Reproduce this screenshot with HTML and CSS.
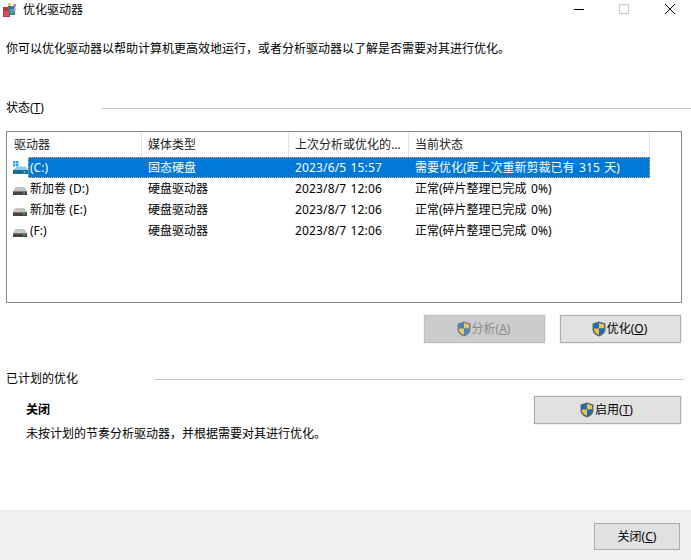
FILE: index.html
```html
<!DOCTYPE html>
<html lang="zh-CN">
<head>
<meta charset="utf-8">
<title>优化驱动器</title>
<link rel="stylesheet" href="styles.css">
</head>
<body>
<svg class="defs" width="0" height="0">
  <defs>
    <symbol id="shield" viewBox="0 0 14 16">
      <path d="M7 .5 13.500 2.500V8.500C13.500 12 10 14.500 7 15.500 4 14.500 .5 12 .5 8.500V2.500Z" fill="#5b6570"/>
      <path d="M7 2 2 3.500V7.500H7Z" fill="#0d6fc8"/>
      <path d="M7 2 12 3.500V7.500H7Z" fill="#f4c440"/>
      <path d="M2 7.500H7V13.800C4.500 12.800 2 11 2 8.500Z" fill="#f4c440"/>
      <path d="M12 7.500H7V13.800C9.500 12.800 12 11 12 8.500Z" fill="#0d6fc8"/>
    </symbol>
    <symbol id="hdd" viewBox="0 0 14 8">
      <path d="M2.500 0H11.500L14 4H0Z" fill="#c4c4c4"/>
      <rect x="0" y="4" width="14" height="4" fill="#454545"/>
      <rect x="0" y="4" width="14" height="1" fill="#777"/>
      <rect x="10" y="5.500" width="2" height="1" fill="#5fd35f"/>
    </symbol>
    <symbol id="ssd" viewBox="0 0 15 13">
      <rect x="0" y="0" width="2.500" height="2.500" fill="#27a7f0"/>
      <rect x="3" y="0" width="2.500" height="2.500" fill="#27a7f0"/>
      <rect x="0" y="3" width="2.500" height="2.500" fill="#27a7f0"/>
      <rect x="3" y="3" width="2.500" height="2.500" fill="#27a7f0"/>
      <path d="M4 5.500H12.500L15 9H0Z" fill="#8ccbe8"/>
      <rect x="0" y="9" width="15" height="4" fill="#1c6c98"/>
      <rect x="10.500" y="10.500" width="2" height="1" fill="#9be6ff"/>
    </symbol>
  </defs>
</svg>
<div class="window">
  <header class="titlebar">
    <svg class="appicon" viewBox="0 0 14 14" width="14" height="14">
      <rect x="0" y="4" width="7" height="10" fill="#b5363c"/>
      <rect x="5" y="3" width="7" height="9" fill="#3c6f9c"/>
      <rect x="7" y="6" width="4" height="5" fill="#3fae8a"/>
      <rect x="1" y="8" width="5" height="5" fill="#d8505a"/>
      <rect x="5" y="0" width="3" height="3" fill="#cbd65a"/>
      <rect x="10" y="1" width="3" height="3" fill="#d27be0"/>
      <rect x="11" y="5" width="2" height="3" fill="#e7a6ec"/>
    </svg>
    <span class="title">优化驱动器</span>
    <div class="controls">
      <svg class="ctl" viewBox="0 0 46 18" width="46" height="18"><rect x="21" y="9" width="10" height="1" fill="#000"/></svg>
      <svg class="ctl" viewBox="0 0 46 18" width="46" height="18"><rect x="20.500" y="4.500" width="9" height="9" fill="none" stroke="#c8c8c8"/></svg>
      <svg class="ctl" viewBox="0 0 46 18" width="46" height="18"><path d="M20 4 30 14M30 4 20 14" stroke="#000" fill="none"/></svg>
    </div>
  </header>

  <main class="content">
    <p class="intro">你可以优化驱动器以帮助计算机更高效地运行，或者分析驱动器以了解是否需要对其进行优化。</p>

    <div class="group-label status-label">
      <span>状态(<u>T</u>)</span><span class="rule"></span>
    </div>

    <div class="listbox">
      <div class="row head">
        <div class="cell first">驱动器</div>
        <div class="cell">媒体类型</div>
        <div class="cell">上次分析或优化的...</div>
        <div class="cell">当前状态</div>
      </div>
      <div class="row selected">
        <div class="cell first name"><svg class="drive ssd" width="15" height="13"><use href="#ssd"/></svg><span class="namebox">(C:)</span></div>
        <div class="cell">固态硬盘</div>
        <div class="cell num">2023/6/5 15:57</div>
        <div class="cell">需要优化(距上次重新剪裁已有<span class="num"> 315 </span>天)</div>
      </div>
      <div class="row">
        <div class="cell first name"><svg class="drive" width="14" height="8"><use href="#hdd"/></svg><span class="namebox">新加卷 <span class="num">(D:)</span></span></div>
        <div class="cell">硬盘驱动器</div>
        <div class="cell num">2023/8/7 12:06</div>
        <div class="cell">正常(碎片整理已完成<span class="num"> 0%)</span></div>
      </div>
      <div class="row">
        <div class="cell first name"><svg class="drive" width="14" height="8"><use href="#hdd"/></svg><span class="namebox">新加卷 <span class="num">(E:)</span></span></div>
        <div class="cell">硬盘驱动器</div>
        <div class="cell num">2023/8/7 12:06</div>
        <div class="cell">正常(碎片整理已完成<span class="num"> 0%)</span></div>
      </div>
      <div class="row">
        <div class="cell first name"><svg class="drive" width="14" height="8"><use href="#hdd"/></svg><span class="namebox">(F:)</span></div>
        <div class="cell">硬盘驱动器</div>
        <div class="cell num">2023/8/7 12:06</div>
        <div class="cell">正常(碎片整理已完成<span class="num"> 0%)</span></div>
      </div>
    </div>

    <div class="actions">
      <button class="btn disabled" type="button"><svg class="shield" width="14" height="16"><use href="#shield"/></svg>分析(<u>A</u>)</button>
      <button class="btn" type="button"><svg class="shield" width="14" height="16"><use href="#shield"/></svg>优化(<u>O</u>)</button>
    </div>

    <div class="group-label sched-label">
      <span>已计划的优化</span><span class="rule"></span>
    </div>

    <div class="schedule">
      <div class="sched-text">
        <div class="sched-state">关闭</div>
        <div class="sched-desc">未按计划的节奏分析驱动器，并根据需要对其进行优化。</div>
      </div>
      <button class="btn wide" type="button"><svg class="shield" width="14" height="16"><use href="#shield"/></svg>启用(<u>T</u>)</button>
    </div>
  </main>

  <footer class="footer">
    <button class="btn close" type="button">关闭(<u>C</u>)</button>
  </footer>
</div>
</body>
</html>
```

FILE: styles.css
```css
* { box-sizing: border-box; }
html, body { margin: 0; padding: 0; background: #fff; }
body {
  font-family: "Noto Sans", "Noto Sans CJK SC", sans-serif;
  font-size: 12px;
  line-height: 16px;
  color: #000;
}
.defs { display: block; height: 0; }
.window { width: 691px; height: 560px; display: flex; flex-direction: column; overflow: hidden; }

.titlebar { height: 18px; display: flex; align-items: center; flex: none; padding-left: 3px; position: relative; }
.appicon { margin-top: 2px; flex: none; }
.title { margin-left: 6px; margin-top: 1px; }
.controls { margin-left: auto; display: flex; margin-right: 0; }
.ctl { display: block; }

.content { flex: 1; padding: 23px 9px 0 6px; min-height: 0; }
.intro { margin: 0; height: 16px; }

.group-label { display: flex; align-items: center; }
.status-label { margin-top: 43px; height: 16px; }
.sched-label { margin-top: 28px; height: 16px; }
.rule { flex: 1; height: 1px; background: #c4c4c4; }
.status-label .rule { margin-left: 58px; margin-right: -9px; }
.sched-label .rule { margin-left: 77px; margin-right: -2px; }

.listbox { margin-top: 15px; height: 172px; border: 1px solid #828790; background: #fff; }
.row { display: grid; grid-template-columns: 135px 147px 120px 241px; width: 643px; height: 21px; align-items: center; position: relative; }
.head { height: 25px; }
.head .cell { height: 25px; line-height: 25px; border-right: 1px solid #e5e5e5; color: #222; }
.cell { padding-left: 6px; white-space: nowrap; overflow: hidden; }
.first { padding-left: 7px; }
.num { letter-spacing: .15px; word-spacing: 1px; }
.name { display: flex; align-items: center; padding-left: 6px; overflow: visible; }
.drive { flex: none; margin-top: 5px; margin-right: 2px; }
.namebox { height: 21px; line-height: 21px; padding-left: 1px; }
.selected { background: linear-gradient(#0078d7, #0078d7) 21px 0 / 100% 100% no-repeat; color: #fff; }
.selected::after { content: ""; position: absolute; left: 21px; top: 0; right: 0; bottom: 0; border: 1px dotted #f0b070; }
.selected .ssd { margin-top: 0; margin-right: 1px; }

.actions { display: flex; justify-content: flex-end; gap: 15px; margin-top: 12px; height: 28px; padding-right: 1px; }
.btn {
  font: inherit;
  width: 121px;
  height: 28px;
  padding: 0;
  display: inline-flex;
  align-items: center;
  justify-content: center;
  color: #000;
  background: #e1e1e1;
  border: 1px solid #adadad;
  outline: 1px solid #f2f2f2;
}
.btn u { text-underline-offset: 1px; }
.shield { flex: none; margin-left: -2px; margin-right: 1px; }
.btn.disabled { background: #cccccc; color: #8a8a8a; border-color: #bfbfbf; }
.btn.disabled .shield { opacity: .75; }
.btn.wide { width: 147px; }
.btn.close { width: 86px; height: 27px; outline: none; }

.schedule { display: flex; justify-content: space-between; padding-left: 20px; padding-right: 1px; margin-top: 9px; }
.sched-state { font-weight: 700; margin-top: 6px; }
.sched-desc { margin-top: 8px; }

.footer { flex: none; height: 50px; background: #f0f0f0; border-top: 1px solid #e6e6e6; display: flex; justify-content: flex-end; padding: 12px 11px 0 0; }
```
